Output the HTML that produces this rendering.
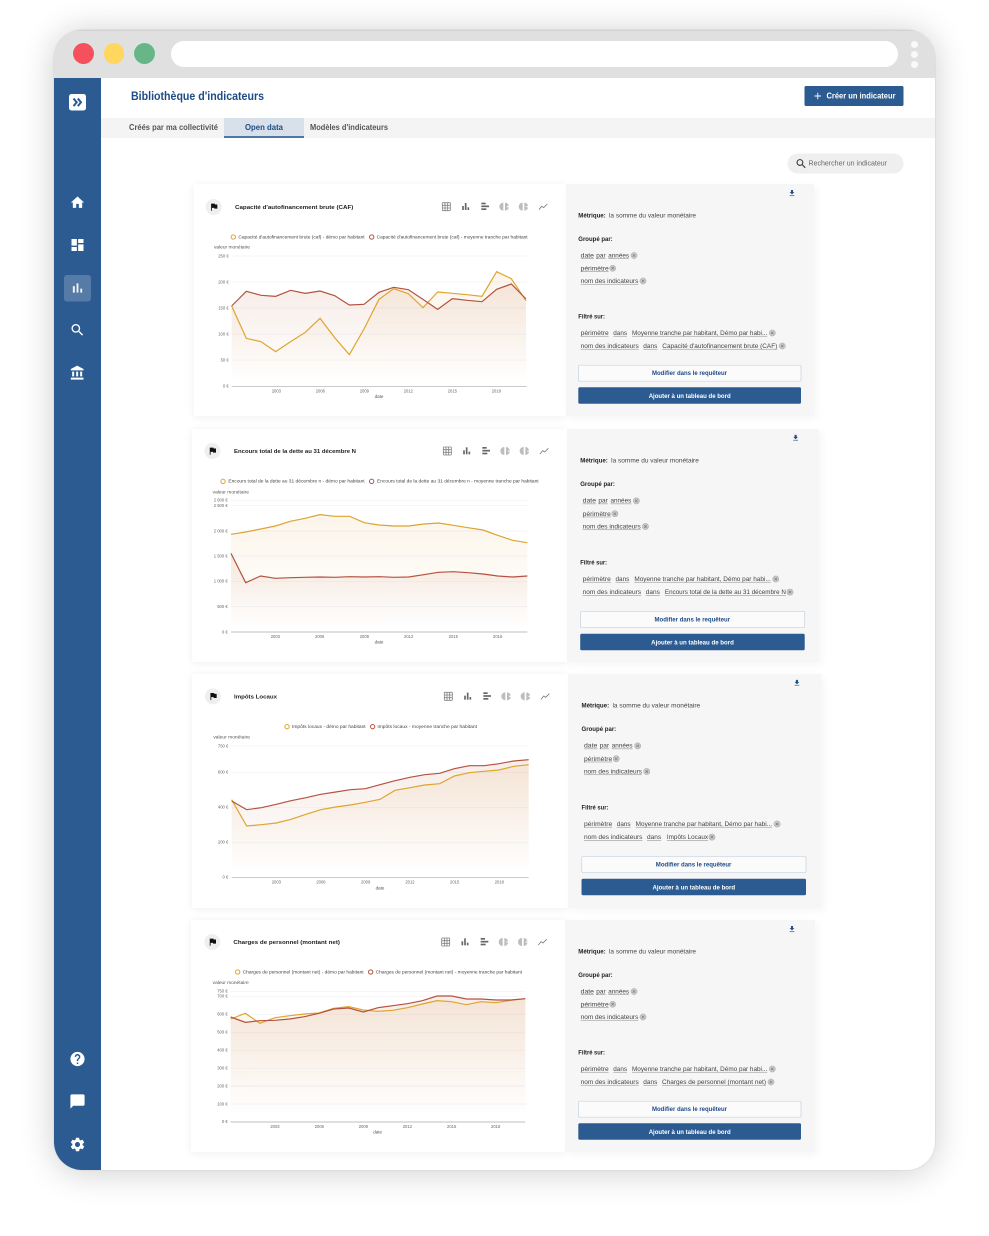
<!DOCTYPE html>
<html lang="fr">
<head>
<meta charset="utf-8">
<title>Bibliothèque d'indicateurs</title>
<style>
html,body{margin:0;padding:0;background:#fff}
body{position:relative;width:989px;height:1236px;overflow:hidden;font-family:"Liberation Sans",sans-serif}
.win{position:absolute;left:54px;top:30px;width:880.5px;height:1140px;border-radius:28px;background:#fff;box-shadow:0 0 0 .6px #d8d8d8,0 2px 34px rgba(0,0,0,.2);overflow:hidden}
.bar{position:absolute;left:0;top:0;right:0;height:48px;background:#e0e0e0;border-top:1px solid #d2d2d2;box-sizing:border-box}
.side{position:absolute;left:0;top:48px;width:47px;bottom:0;background:#2b5b90}
.tabs{position:absolute;left:47px;right:0;top:88px;height:19.5px;background:#f4f4f4}
.active{position:absolute;left:170px;top:88px;width:80px;height:20px;box-sizing:border-box;background:#d8e0e9;border-bottom:2px solid #4e76a6}
.url{position:absolute;left:117px;top:10.5px;width:727px;height:26px;border-radius:13px;background:#fff}
.dot{position:absolute;border-radius:50%}
.layer{position:absolute;left:0;top:0;filter:blur(.35px)}
.pnl{position:absolute;background:#f6f6f6;box-shadow:3px 3px 8px rgba(0,0,0,.04)}
.crd{position:absolute;background:#fff;box-shadow:0 1px 8px rgba(0,0,0,.07)}
svg text{font-family:"Liberation Sans",sans-serif}
.ck{position:absolute}
</style>
</head>
<body>
<div class="win">
  <div class="bar"></div>
  <div class="url"></div>
  <div class="dot" style="left:19px;top:12.5px;width:21px;height:21px;background:#f5505c;box-shadow:0 0 0 1px #d9e6e6"></div>
  <div class="dot" style="left:49.5px;top:13px;width:20.5px;height:20.5px;background:#ffd75e"></div>
  <div class="dot" style="left:80px;top:12.5px;width:21px;height:21px;background:#68b688;box-shadow:0 0 0 1px #d9e6e6"></div>
  <div class="dot" style="left:856.5px;top:10.5px;width:7px;height:7px;background:#f9f9f9"></div>
  <div class="dot" style="left:856.5px;top:20.5px;width:7px;height:7px;background:#f9f9f9"></div>
  <div class="dot" style="left:856.5px;top:30.5px;width:7px;height:7px;background:#f9f9f9"></div>
  <div class="side"></div>
  <div class="tabs"></div>
  <div class="active"></div>
</div>

<div class="crd" style="left:194px;top:184px;width:372px;height:232px"></div>
<div class="pnl" style="left:566px;top:184px;width:248px;height:232px"></div>
<div class="crd" style="left:192px;top:429px;width:375px;height:233px"></div>
<div class="pnl" style="left:567px;top:429px;width:252px;height:233px"></div>
<div class="crd" style="left:192px;top:674px;width:376px;height:234px"></div>
<div class="pnl" style="left:568px;top:674px;width:253px;height:234px"></div>
<div class="crd" style="left:191px;top:920px;width:374px;height:232px"></div>
<div class="pnl" style="left:565px;top:920px;width:250px;height:232px"></div>

<svg width="0" height="0" style="position:absolute">
<defs>
<linearGradient id="gy" x1="0" y1="0" x2="0" y2="1"><stop offset="0" stop-color="#e0a040" stop-opacity=".11"/><stop offset=".95" stop-color="#e0a040" stop-opacity="0"/></linearGradient>
<linearGradient id="gr" x1="0" y1="0" x2="0" y2="1"><stop offset="0" stop-color="#b85a30" stop-opacity=".11"/><stop offset=".95" stop-color="#b85a30" stop-opacity="0"/></linearGradient>
<symbol id="i-flag" viewBox="0 0 24 24"><path d="M14.4 6L14 4H5v17h2v-7h5.6l.4 2h7V6z"/></symbol>
<symbol id="i-dl" viewBox="0 0 24 24"><path d="M19 9h-4V3H9v6H5l7 7 7-7zM5 18v2h14v-2H5z"/></symbol>
<symbol id="i-home" viewBox="0 0 24 24"><path d="M10 20v-6h4v6h5v-8h3L12 3 2 12h3v8z"/></symbol>
<symbol id="i-dash" viewBox="0 0 24 24"><path d="M3 13h8V3H3v10zm0 8h8v-6H3v6zm10 0h8V11h-8v10zm0-18v6h8V3h-8z"/></symbol>
<symbol id="i-bars" viewBox="0 0 24 24"><path d="M5 9.2h3V19H5zM10.6 5h2.8v14h-2.8zm5.6 8H19v6h-2.8z"/></symbol>
<symbol id="i-search" viewBox="0 0 24 24"><path d="M15.5 14h-.79l-.28-.27C15.41 12.59 16 11.11 16 9.5 16 5.91 13.09 3 9.5 3S3 5.91 3 9.5 5.91 16 9.5 16c1.61 0 3.09-.59 4.23-1.57l.27.28v.79l5 4.99L20.49 19l-4.99-5zm-6 0C7.01 14 5 11.99 5 9.5S7.01 5 9.5 5 14 7.01 14 9.5 11.99 14 9.5 14z"/></symbol>
<symbol id="i-bank" viewBox="0 0 24 24"><path d="M4 10v7h3v-7H4zm6 0v7h3v-7h-3zM2 22h19v-3H2v3zm14-12v7h3v-7h-3zm-4.5-9L2 6v2h19V6l-9.5-5z"/></symbol>
<symbol id="i-help" viewBox="0 0 24 24"><path d="M12 2C6.48 2 2 6.48 2 12s4.48 10 10 10 10-4.48 10-10S17.52 2 12 2zm1 17h-2v-2h2v2zm2.07-7.75l-.9.92C13.45 12.9 13 13.5 13 15h-2v-.5c0-1.1.45-2.1 1.17-2.83l1.24-1.26c.37-.36.59-.86.59-1.41 0-1.1-.9-2-2-2s-2 .9-2 2H8c0-2.21 1.79-4 4-4s4 1.79 4 4c0 .88-.36 1.68-.93 2.25z"/></symbol>
<symbol id="i-chat" viewBox="0 0 24 24"><path d="M20 2H4c-1.1 0-2 .9-2 2v18l4-4h14c1.1 0 2-.9 2-2V4c0-1.1-.9-2-2-2z"/></symbol>
<symbol id="i-gear" viewBox="0 0 24 24"><path d="M19.14 12.94c.04-.3.06-.61.06-.94 0-.32-.02-.64-.07-.94l2.03-1.58c.18-.14.23-.41.12-.61l-1.92-3.32c-.12-.22-.37-.29-.59-.22l-2.39.96c-.5-.38-1.03-.7-1.62-.94l-.36-2.54c-.04-.24-.24-.41-.48-.41h-3.84c-.24 0-.43.17-.47.41l-.36 2.54c-.59.24-1.13.57-1.62.94l-2.39-.96c-.22-.08-.47 0-.59.22L2.74 8.87c-.12.21-.08.47.12.61l2.03 1.58c-.05.3-.09.63-.09.94s.02.64.07.94l-2.03 1.58c-.18.14-.23.41-.12.61l1.92 3.32c.12.22.37.29.59.22l2.39-.96c.5.38 1.03.7 1.62.94l.36 2.54c.05.24.24.41.48.41h3.84c.24 0 .44-.17.47-.41l.36-2.54c.59-.24 1.13-.56 1.62-.94l2.39.96c.22.08.47 0 .59-.22l1.92-3.32c.12-.22.07-.47-.12-.61l-2.01-1.58zM12 15.6c-1.98 0-3.6-1.62-3.6-3.6s1.62-3.6 3.6-3.6 3.6 1.62 3.6 3.6-1.62 3.6-3.6 3.6z"/></symbol>
<g id="tools">
  <g fill="none" stroke="#808080" stroke-width="2.400"><rect x="-12" y="-12" width="24" height="24" rx="1.500"/><path d="M-12-4h24M-12 4h24M-4-12v24M4-12v24"/></g>
  <g fill="#666"><rect x="47.500" y="-2" width="5" height="12"/><rect x="55.500" y="-11" width="5" height="21"/><rect x="63.500" y="2" width="5" height="8"/></g>
  <g fill="#666"><rect x="105" y="-12" width="13" height="5"/><rect x="105" y="-3.500" width="23" height="5"/><rect x="105" y="5" width="15" height="5"/></g>
  <g fill="#bdbdbd"><path d="M171-12a12 12 0 0 0 0 24zM176-12a12 12 0 0 1 11.500 10h-5v4h5a12 12 0 0 1-11.500 10z"/></g>
  <g fill="#bdbdbd"><path d="M229-12a12 12 0 0 0 0 24zM234-12a12 12 0 0 1 11.500 10h-5v4h5a12 12 0 0 1-11.500 10z"/></g>
  <polyline points="278,9 286,-1 292,3 303,-8" fill="none" stroke="#777" stroke-width="2.400"/>
</g>
</defs>
</svg>

<!-- Page chrome -->
<svg class="layer" width="989" height="1236" viewBox="0 0 989 1236">
  <rect x="69" y="94" width="17" height="16.500" rx="2.500" fill="#fff"/>
  <path d="M73.500 98.500l3.200 3.800-3.200 3.800M77.800 98.500l3.200 3.800-3.200 3.800" fill="none" stroke="#2b5b90" stroke-width="2"/>
  <use href="#i-home" x="69.500" y="194.500" width="16" height="16" fill="#fff"/>
  <use href="#i-dash" x="69.500" y="237" width="16" height="16" fill="#fff"/>
  <rect x="64" y="275" width="27" height="26.500" rx="3" fill="#fff" fill-opacity=".2"/>
  <use href="#i-bars" x="69.500" y="280" width="16" height="16" fill="#fff" fill-opacity=".9"/>
  <use href="#i-search" x="69.500" y="322" width="16" height="16" fill="#fff"/>
  <use href="#i-bank" x="69.500" y="365" width="16" height="16" fill="#fff"/>
  <use href="#i-help" x="69" y="1050.500" width="17" height="17" fill="#fff"/>
  <use href="#i-chat" x="69" y="1093" width="17" height="17" fill="#fff"/>
  <use href="#i-gear" x="69" y="1136" width="17" height="17" fill="#fff"/>

  <text x="131" y="100" font-size="11.500" font-weight="700" fill="#1d4c86" textLength="133" lengthAdjust="spacingAndGlyphs">Bibliothèque d'indicateurs</text>
  <text x="129" y="130" font-size="8" font-weight="700" fill="#555" textLength="89" lengthAdjust="spacingAndGlyphs">Créés par ma collectivité</text>
  <text x="245" y="130" font-size="8" font-weight="700" fill="#1d4c86" textLength="38" lengthAdjust="spacingAndGlyphs">Open data</text>
  <text x="310" y="130" font-size="8" font-weight="700" fill="#555" textLength="78" lengthAdjust="spacingAndGlyphs">Modèles d'indicateurs</text>

  <rect x="804.500" y="86" width="99" height="20" rx="1.500" fill="#2b5b90"/>
  <path d="M814.500 96h6.500M817.750 92.800v6.400" stroke="#fff" stroke-width=".9"/>
  <text x="826.500" y="98.500" font-size="8" font-weight="700" fill="#fff" textLength="69" lengthAdjust="spacingAndGlyphs">Créer un indicateur</text>

  <rect x="787.500" y="153.500" width="116" height="20" rx="10" fill="#efefef"/>
  <use href="#i-search" x="795" y="157.500" width="12.500" height="12.500" fill="#333"/>
  <text x="808.500" y="165.500" font-size="7.500" fill="#666" textLength="78.500" lengthAdjust="spacingAndGlyphs">Rechercher un indicateur</text>
</svg>

<!-- Chart 1 -->
<svg class="ck layer" style="left:190px;top:180px" width="380" height="240" viewBox="0 0 1140 720">
  <circle cx="71" cy="81" r="24" fill="#efefef"/><use href="#i-flag" x="57" y="66" width="30" height="30" fill="#111"/>
  <text x="135" y="87" font-size="17.500" font-weight="700" fill="#222" textLength="355" lengthAdjust="spacingAndGlyphs">Capacité d'autofinancement brute (CAF)</text>
  <use href="#tools" x="769" y="80"/>
  <circle cx="130" cy="171" r="6.500" fill="#fff" stroke="#dda52f" stroke-width="3"/>
  <text x="145" y="175" font-size="13.500" fill="#444" textLength="379" lengthAdjust="spacingAndGlyphs">Capacité d'autofinancement brute (caf) - démo par habitant</text>
  <circle cx="545" cy="171" r="6.500" fill="#fff" stroke="#b5523f" stroke-width="3"/>
  <text x="560" y="175" font-size="13.500" fill="#444" textLength="453" lengthAdjust="spacingAndGlyphs">Capacité d'autofinancement brute (caf) - moyenne tranche par habitant</text>
  <text x="72" y="206" font-size="13.500" fill="#555" textLength="108" lengthAdjust="spacingAndGlyphs">valeur monétaire</text>
  <path d="M125 228h885M125 306h885M125 384h885M125 462h885M125 540h885" stroke="#f0f1f6" stroke-width="2"/>
  <polygon fill="url(#gy)" points="125,378 169,475 213,485 257,515 302,485 346,457 390,415 434,473 478,524 522,447 567,358 611,326 655,341 699,383 743,336 787,340 831,344 876,349 920,275 964,296 1008,362 1008,618 125,618"/>
  <polygon fill="url(#gr)" points="125,378 169,334 213,346 257,349 302,331 346,340 390,333 434,347 478,375 522,373 567,337 611,322 655,329 699,358 743,388 787,356 831,361 876,365 920,328 964,312 1008,357 1008,618 125,618"/>
  <polyline fill="none" stroke="#dda52f" stroke-width="3.600" points="125,378 169,475 213,485 257,515 302,485 346,457 390,415 434,473 478,524 522,447 567,358 611,326 655,341 699,383 743,336 787,340 831,344 876,349 920,275 964,296 1008,362"/>
  <polyline fill="none" stroke="#b5523f" stroke-width="3.600" points="125,378 169,334 213,346 257,349 302,331 346,340 390,333 434,347 478,375 522,373 567,337 611,322 655,329 699,358 743,388 787,356 831,361 876,365 920,328 964,312 1008,357"/>
  <path d="M125 619h885" stroke="#aaa" stroke-width="2"/>
  <g font-size="12.500" fill="#666" text-anchor="end">
    <text x="116" y="232">250 €</text><text x="116" y="310">200 €</text><text x="116" y="388">150 €</text><text x="116" y="466">100 €</text><text x="116" y="544">50 €</text><text x="116" y="622">0 €</text>
  </g>
  <g font-size="12.500" fill="#666" text-anchor="middle">
    <text x="259" y="637">2003</text><text x="391" y="637">2006</text><text x="523" y="637">2009</text><text x="655" y="637">2012</text><text x="787" y="637">2015</text><text x="919" y="637">2018</text>
  </g>
  <text x="567" y="654" font-size="13.500" fill="#555" text-anchor="middle">date</text>
</svg>

<!-- Chart 2 -->
<svg class="ck layer" style="left:190px;top:430px" width="380" height="240" viewBox="0 0 1140 720">
  <circle cx="67" cy="63" r="24" fill="#efefef"/><use href="#i-flag" x="53" y="48" width="30" height="30" fill="#111"/>
  <text x="132" y="69" font-size="17.500" font-weight="700" fill="#222" textLength="366" lengthAdjust="spacingAndGlyphs">Encours total de la dette au 31 décembre N</text>
  <use href="#tools" x="772" y="63"/>
  <circle cx="99" cy="154" r="6.500" fill="#fff" stroke="#dda52f" stroke-width="3"/>
  <text x="115" y="158" font-size="13.500" fill="#444" textLength="409" lengthAdjust="spacingAndGlyphs">Encours total de la dette au 31 décembre n - démo par habitant</text>
  <circle cx="545" cy="154" r="6.500" fill="#fff" stroke="#b5523f" stroke-width="3"/>
  <text x="561" y="158" font-size="13.500" fill="#444" textLength="485" lengthAdjust="spacingAndGlyphs">Encours total de la dette au 31 décembre n - moyenne tranche par habitant</text>
  <text x="68" y="190" font-size="13.500" fill="#555" textLength="109" lengthAdjust="spacingAndGlyphs">valeur monétaire</text>
  <path d="M123 212h889M123 227h889M123 303h889M123 378h889M123 454h889M123 530h889" stroke="#f0f1f6" stroke-width="2"/>
  <polygon fill="url(#gy)" points="123,313 167,306 212,297 256,288 301,274 345,265 390,254 434,259 479,259 523,278 567,285 612,288 656,288 701,282 745,279 790,286 834,293 879,300 923,316 968,331 1012,338 1012,605 123,605"/>
  <polygon fill="url(#gr)" points="123,370 167,458 212,438 256,445 301,443 345,442 390,441 434,442 479,440 523,441 567,440 612,442 656,441 701,434 745,427 790,425 834,428 879,432 923,438 968,441 1012,438 1012,605 123,605"/>
  <polyline fill="none" stroke="#dda52f" stroke-width="3.600" points="123,313 167,306 212,297 256,288 301,274 345,265 390,254 434,259 479,259 523,278 567,285 612,288 656,288 701,282 745,279 790,286 834,293 879,300 923,316 968,331 1012,338"/>
  <polyline fill="none" stroke="#b5523f" stroke-width="3.600" points="123,370 167,458 212,438 256,445 301,443 345,442 390,441 434,442 479,440 523,441 567,440 612,442 656,441 701,434 745,427 790,425 834,428 879,432 923,438 968,441 1012,438"/>
  <path d="M123 606h889" stroke="#aaa" stroke-width="2"/>
  <g font-size="12.500" fill="#666" text-anchor="end">
    <text x="113" y="215">2 600 €</text><text x="113" y="231">2 500 €</text><text x="113" y="307">2 000 €</text><text x="113" y="382">1 500 €</text><text x="113" y="458">1 000 €</text><text x="113" y="534">500 €</text><text x="113" y="610">0 €</text>
  </g>
  <g font-size="12.500" fill="#666" text-anchor="middle">
    <text x="256" y="624">2003</text><text x="389" y="624">2006</text><text x="523" y="624">2009</text><text x="656" y="624">2012</text><text x="790" y="624">2015</text><text x="923" y="624">2018</text>
  </g>
  <text x="567" y="641" font-size="13.500" fill="#555" text-anchor="middle">date</text>
</svg>

<!-- Chart 3 -->
<svg class="ck layer" style="left:190px;top:675px" width="380" height="240" viewBox="0 0 1140 720">
  <circle cx="69" cy="64" r="24" fill="#efefef"/><use href="#i-flag" x="55" y="49" width="30" height="30" fill="#111"/>
  <text x="132" y="70" font-size="17.500" font-weight="700" fill="#222" textLength="129" lengthAdjust="spacingAndGlyphs">Impôts Locaux</text>
  <use href="#tools" x="775" y="64"/>
  <circle cx="291" cy="155" r="6.500" fill="#fff" stroke="#dda52f" stroke-width="3"/>
  <text x="306" y="159" font-size="13.500" fill="#444" textLength="221" lengthAdjust="spacingAndGlyphs">Impôts locaux - démo par habitant</text>
  <circle cx="548" cy="155" r="6.500" fill="#fff" stroke="#b5523f" stroke-width="3"/>
  <text x="562" y="159" font-size="13.500" fill="#444" textLength="299" lengthAdjust="spacingAndGlyphs">Impôts locaux - moyenne tranche par habitant</text>
  <text x="70" y="191" font-size="13.500" fill="#555" textLength="110" lengthAdjust="spacingAndGlyphs">valeur monétaire</text>
  <path d="M125 213h891M125 292h891M125 397h891M125 502h891" stroke="#f1f1f3" stroke-width="2"/>
  <polygon fill="url(#gy)" points="125,374 170,453 214,449 259,444 303,433 348,418 392,404 437,396 481,390 526,382 570,373 615,346 660,338 704,330 749,326 793,303 838,293 882,289 927,285 971,274 1016,269 1016,607 125,607"/>
  <polygon fill="url(#gr)" points="125,378 170,404 214,398 259,388 303,377 348,368 392,358 437,351 481,344 526,341 570,329 615,317 660,307 704,299 749,295 793,281 838,272 882,272 927,266 971,258 1016,254 1016,607 125,607"/>
  <polyline fill="none" stroke="#dda52f" stroke-width="3.600" points="125,374 170,453 214,449 259,444 303,433 348,418 392,404 437,396 481,390 526,382 570,373 615,346 660,338 704,330 749,326 793,303 838,293 882,289 927,285 971,274 1016,269"/>
  <polyline fill="none" stroke="#b5523f" stroke-width="3.600" points="125,378 170,404 214,398 259,388 303,377 348,368 392,358 437,351 481,344 526,341 570,329 615,317 660,307 704,299 749,295 793,281 838,272 882,272 927,266 971,258 1016,254"/>
  <path d="M125 608h891" stroke="#aaa" stroke-width="2"/>
  <g font-size="12.500" fill="#666" text-anchor="end">
    <text x="115" y="217">750 €</text><text x="115" y="296">600 €</text><text x="115" y="401">400 €</text><text x="115" y="506">200 €</text><text x="115" y="611">0 €</text>
  </g>
  <g font-size="12.500" fill="#666" text-anchor="middle">
    <text x="259" y="626">2003</text><text x="393" y="626">2006</text><text x="527" y="626">2009</text><text x="660" y="626">2012</text><text x="794" y="626">2015</text><text x="928" y="626">2018</text>
  </g>
  <text x="570" y="643" font-size="13.500" fill="#555" text-anchor="middle">date</text>
</svg>

<!-- Chart 4 -->
<svg class="ck layer" style="left:190px;top:920px" width="380" height="240" viewBox="0 0 1140 720">
  <circle cx="67" cy="66" r="24" fill="#efefef"/><use href="#i-flag" x="53" y="51" width="30" height="30" fill="#111"/>
  <text x="130" y="72" font-size="17.500" font-weight="700" fill="#222" textLength="320" lengthAdjust="spacingAndGlyphs">Charges de personnel (montant net)</text>
  <use href="#tools" x="767" y="66"/>
  <circle cx="143" cy="156" r="6.500" fill="#fff" stroke="#dda52f" stroke-width="3"/>
  <text x="158" y="160" font-size="13.500" fill="#444" textLength="363" lengthAdjust="spacingAndGlyphs">Charges de personnel (montant net) - démo par habitant</text>
  <circle cx="542" cy="156" r="6.500" fill="#fff" stroke="#b5523f" stroke-width="3"/>
  <text x="557" y="160" font-size="13.500" fill="#444" textLength="439" lengthAdjust="spacingAndGlyphs">Charges de personnel (montant net) - moyenne tranche par habitant</text>
  <text x="68" y="192" font-size="13.500" fill="#555" textLength="108" lengthAdjust="spacingAndGlyphs">valeur monétaire</text>
  <path d="M122 214h884M122 229h884M122 283h884M122 337h884M122 391h884M122 445h884M122 498h884M122 552h884" stroke="#f1f1f6" stroke-width="2"/>
  <polygon fill="url(#gy)" points="122,297 166,280 210,310 255,293 299,287 343,282 387,279 431,265 476,260 520,270 564,274 608,271 652,263 697,252 741,242 785,245 829,254 873,245 918,248 962,241 1006,236 1006,605 122,605"/>
  <polygon fill="url(#gr)" points="122,291 166,307 210,302 255,301 299,297 343,290 387,280 431,267 476,264 520,276 564,263 608,257 652,251 697,242 741,228 785,228 829,237 873,237 918,240 962,240 1006,236 1006,605 122,605"/>
  <polyline fill="none" stroke="#dda52f" stroke-width="3.600" points="122,297 166,280 210,310 255,293 299,287 343,282 387,279 431,265 476,260 520,270 564,274 608,271 652,263 697,252 741,242 785,245 829,254 873,245 918,248 962,241 1006,236"/>
  <polyline fill="none" stroke="#b5523f" stroke-width="3.600" points="122,291 166,307 210,302 255,301 299,297 343,290 387,280 431,267 476,264 520,276 564,263 608,257 652,251 697,242 741,228 785,228 829,237 873,237 918,240 962,240 1006,236"/>
  <path d="M122 606h884" stroke="#aaa" stroke-width="2"/>
  <g font-size="12.500" fill="#666" text-anchor="end">
    <text x="113" y="217">750 €</text><text x="113" y="233">700 €</text><text x="113" y="287">600 €</text><text x="113" y="341">500 €</text><text x="113" y="395">400 €</text><text x="113" y="449">300 €</text><text x="113" y="502">200 €</text><text x="113" y="556">100 €</text><text x="113" y="609">0 €</text>
  </g>
  <g font-size="12.500" fill="#666" text-anchor="middle">
    <text x="255" y="624">2003</text><text x="388" y="624">2006</text><text x="520" y="624">2009</text><text x="652" y="624">2012</text><text x="785" y="624">2015</text><text x="917" y="624">2018</text>
  </g>
  <text x="563" y="641" font-size="13.500" fill="#555" text-anchor="middle">date</text>
</svg>

<!-- Right panels -->
<svg class="layer" width="989" height="1236" viewBox="0 0 989 1236" style="pointer-events:none">
  <defs>
    <g id="xi"><circle r="3.100" fill="#c9c9c9" stroke="#aaa" stroke-width=".5"/><path d="M-1.300-1.300l2.600 2.600M1.300-1.300l-2.600 2.600" stroke="#777" stroke-width=".6"/></g>
    <g id="panelcommon">
      <use href="#i-dl" x="788" y="189" width="8" height="8" fill="#1d4c86"/>
      <text x="578.300" y="217.300" font-size="6.200" font-weight="700" fill="#222" textLength="27.400" lengthAdjust="spacingAndGlyphs">Métrique:</text>
      <text x="609" y="217.300" font-size="6.200" fill="#444" textLength="87" lengthAdjust="spacingAndGlyphs">la somme du valeur monétaire</text>
      <text x="578.300" y="241" font-size="6.200" font-weight="700" fill="#222" textLength="34.400" lengthAdjust="spacingAndGlyphs">Groupé par:</text>
      <g font-size="6.200" fill="#444">
        <text x="580.700" y="257.300" textLength="13.300" lengthAdjust="spacingAndGlyphs">date</text>
        <text x="596.300" y="257.300" textLength="9.400" lengthAdjust="spacingAndGlyphs">par</text>
        <text x="608.300" y="257.300" textLength="20.700" lengthAdjust="spacingAndGlyphs">années</text>
        <text x="580.700" y="270.300" textLength="28" lengthAdjust="spacingAndGlyphs">périmètre</text>
        <text x="580.700" y="283" textLength="57.600" lengthAdjust="spacingAndGlyphs">nom des indicateurs</text>
        <text x="580.700" y="335" textLength="28" lengthAdjust="spacingAndGlyphs">périmètre</text>
        <text x="613.300" y="335" textLength="13.700" lengthAdjust="spacingAndGlyphs">dans</text>
        <text x="632" y="335" textLength="135.300" lengthAdjust="spacingAndGlyphs">Moyenne tranche par habitant, Démo par habi...</text>
        <text x="580.700" y="348" textLength="58" lengthAdjust="spacingAndGlyphs">nom des indicateurs</text>
        <text x="643.300" y="348" textLength="14" lengthAdjust="spacingAndGlyphs">dans</text>
      </g>
      <path d="M580.700 258.500h13.300M596.300 258.500h9.400M608.300 258.500h20.700M580.700 271.500h28M580.700 284.200h57.600M580.700 336.200h28M613.300 336.200h13.700M632 336.200h135.300M580.700 349.200h58M643.300 349.200h14" stroke="#666" stroke-width=".4"/>
      <use href="#xi" x="634" y="255.500"/><use href="#xi" x="612.700" y="268.300"/><use href="#xi" x="643" y="281"/><use href="#xi" x="772.300" y="333"/>
      <text x="578.300" y="318.500" font-size="6.200" font-weight="700" fill="#222" textLength="26.700" lengthAdjust="spacingAndGlyphs">Filtré sur:</text>
      <rect x="578.500" y="365.200" width="222.500" height="16" rx="1.500" fill="#fbfbfb" stroke="#c6d2df" stroke-width=".7"/>
      <text x="652" y="375.200" font-size="6.200" font-weight="700" fill="#1d4c86" textLength="75" lengthAdjust="spacingAndGlyphs">Modifier dans le requêteur</text>
      <rect x="578.300" y="387.300" width="222.700" height="16.400" rx="1.500" fill="#2b5b90"/>
      <text x="648.700" y="397.800" font-size="6.200" font-weight="700" fill="#fff" textLength="82" lengthAdjust="spacingAndGlyphs">Ajouter à un tableau de bord</text>
    </g>
  </defs>

  <g>
    <use href="#panelcommon"/>
    <text x="662.300" y="348" font-size="6.200" fill="#444" textLength="115" lengthAdjust="spacingAndGlyphs">Capacité d'autofinancement brute (CAF)</text>
    <path d="M662.300 349.200h115" stroke="#666" stroke-width=".4"/>
    <use href="#xi" x="782.300" y="346"/>
  </g>
  <g transform="translate(-2.700 243.300) scale(1.008)">
    <use href="#panelcommon"/>
    <text x="662.300" y="348" font-size="6.200" fill="#444" textLength="120" lengthAdjust="spacingAndGlyphs">Encours total de la dette au 31 décembre N</text>
    <path d="M662.300 349.200h120" stroke="#666" stroke-width=".4"/>
    <use href="#xi" x="786.400" y="346"/>
  </g>
  <g transform="translate(-1.400 488.300) scale(1.008)">
    <use href="#panelcommon"/>
    <text x="663" y="348" font-size="6.200" fill="#444" textLength="40.800" lengthAdjust="spacingAndGlyphs">Impôts Locaux</text>
    <path d="M663 349.200h40.800" stroke="#666" stroke-width=".4"/>
    <use href="#xi" x="707.700" y="346"/>
  </g>
  <g transform="translate(0 736)">
    <use href="#panelcommon"/>
    <text x="662" y="348" font-size="6.200" fill="#444" textLength="104" lengthAdjust="spacingAndGlyphs">Charges de personnel (montant net)</text>
    <path d="M662 349.200h104" stroke="#666" stroke-width=".4"/>
    <use href="#xi" x="771" y="346"/>
  </g>
</svg>
</body>
</html>
